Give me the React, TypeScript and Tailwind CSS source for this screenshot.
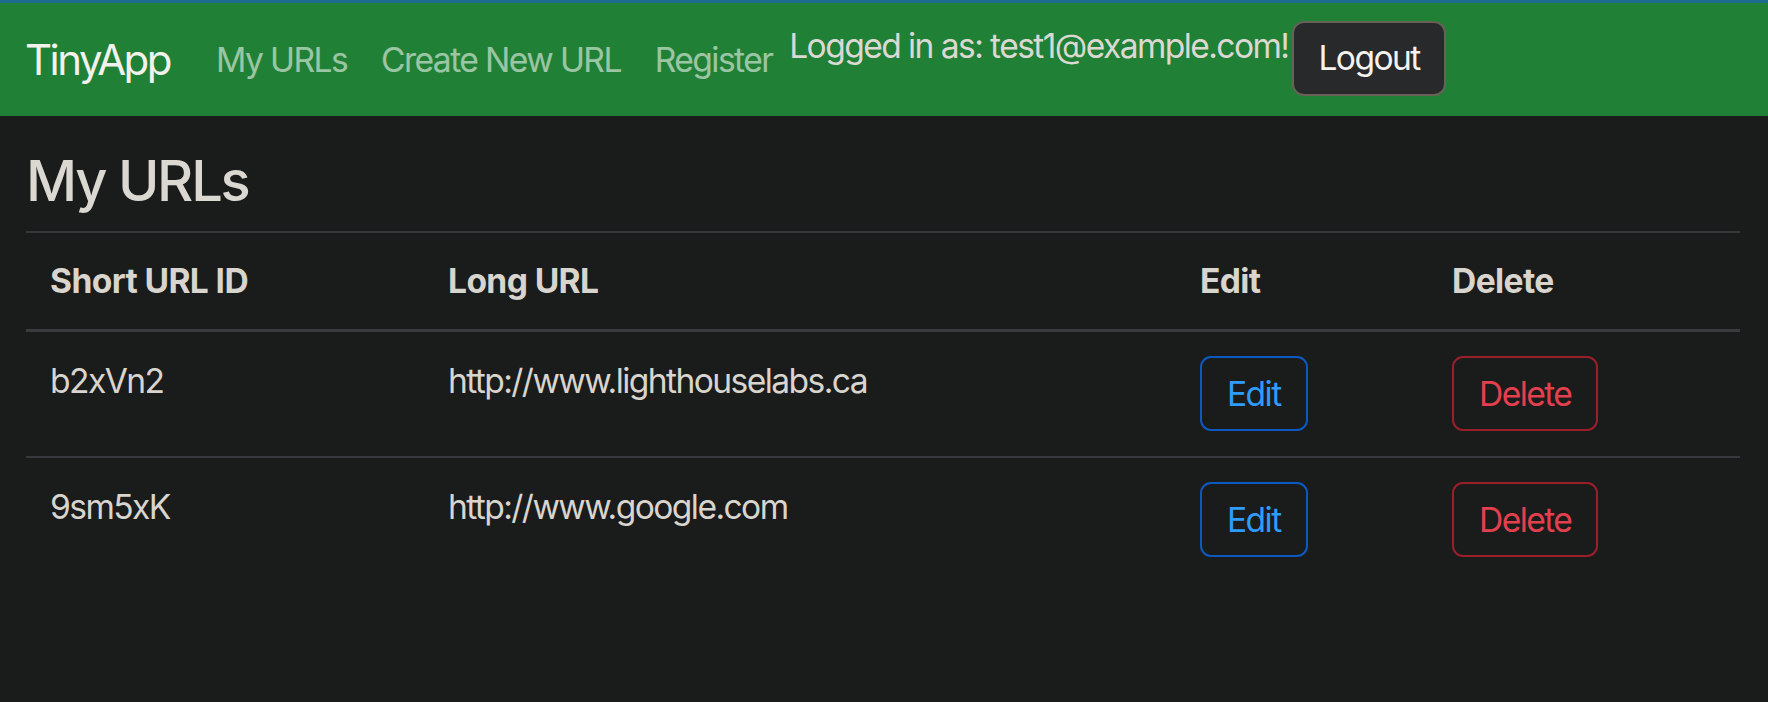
import React from 'react';

interface UrlRow {
  id: string;
  longURL: string;
}

const urls: UrlRow[] = [
  { id: 'b2xVn2', longURL: 'http://www.lighthouselabs.ca' },
  { id: '9sm5xK', longURL: 'http://www.google.com' },
];

const Navbar: React.FC = () => {
  return (
    <nav className="h-[116px] bg-[#208035] border-t-[3px] border-[#1d6b8e] flex items-center px-[25px]">
      <a href="#" className="text-[42px] leading-[60px] text-[#f3f1ed] mr-[29px] tracking-[-0.06em]">
        TinyApp
      </a>
      <div className="flex items-center">
        <a href="#" className="px-[17px] text-[33.6px] leading-[50px] text-white/55 tracking-[-0.047em]">My URLs</a>
        <a href="#" className="px-[17px] text-[33.6px] leading-[50px] text-white/55 tracking-[-0.047em]">Create New URL</a>
        <a href="#" className="px-[17px] text-[33.6px] leading-[50px] text-white/55 tracking-[-0.047em]">Register</a>
      </div>
      {/* user box: text sits at the top, next to the button */}
      <div className="flex items-start mb-[2px]">
        <span className="text-[33.6px] leading-[50px] text-[#dcd8d2] tracking-[-0.047em]">
          Logged in as: test1@example.com!
        </span>
        <button className="ml-[4px] h-[75px] px-[24px] bg-[#28292b] border-2 border-[#676156] rounded-[12px] text-[33.6px] text-[#f4f2ee] tracking-[-0.047em]">
          Logout
        </button>
      </div>
    </nav>
  );
};

const App: React.FC = () => {
  return (
    <div className="min-h-screen bg-[#1a1b1b] font-['Inter','Noto_Sans',sans-serif]">
      <Navbar />

      <main className="pl-[26px] pr-[28px]">
        <h1 className="mt-[32px] mb-[16px] text-[56px] leading-[67px] font-medium text-[#dbd7d1] tracking-[-0.04em]">
          My URLs
        </h1>

        <table className="w-full border-collapse border-t-2 border-[#37383b] text-[#d8d4ce] text-[33.6px] tracking-[-0.047em]">
          <colgroup>
            <col className="w-[398px]" />
            <col className="w-[752px]" />
            <col className="w-[252px]" />
            <col />
          </colgroup>
          <thead>
            <tr className="border-b-[3px] border-[#3a3b3f]">
              <th className="text-left font-bold px-[24px] py-[23px] leading-[50px] align-bottom tracking-[-0.018em]">Short URL ID</th>
              <th className="text-left font-bold px-[24px] py-[23px] leading-[50px] align-bottom tracking-[-0.018em]">Long URL</th>
              <th className="text-left font-bold px-[24px] py-[23px] leading-[50px] align-bottom tracking-[-0.018em]">Edit</th>
              <th className="text-left font-bold px-[24px] py-[23px] leading-[50px] align-bottom tracking-[-0.018em]">Delete</th>
            </tr>
          </thead>
          <tbody>
            {urls.map((url, i) => (
              <tr key={url.id} className={i < urls.length - 1 ? 'border-b-2 border-[#37383b]' : ''}>
                <td className="px-[24px] pt-[24px] pb-[25px] leading-[50px] align-top">{url.id}</td>
                <td className="px-[24px] pt-[24px] pb-[25px] leading-[50px] align-top">{url.longURL}</td>
                <td className="px-[24px] pt-[24px] pb-[25px] align-top">
                  <button className="h-[75px] px-[25px] border-2 border-[#0c59c1] rounded-[11px] text-[#2f9bfa] leading-[50px]">
                    Edit
                  </button>
                </td>
                <td className="px-[24px] pt-[24px] pb-[25px] align-top">
                  <button className="h-[75px] px-[25px] border-2 border-[#9b1f2a] rounded-[11px] text-[#e3404e] leading-[50px]">
                    Delete
                  </button>
                </td>
              </tr>
            ))}
          </tbody>
        </table>
      </main>
    </div>
  );
};

export default App;
